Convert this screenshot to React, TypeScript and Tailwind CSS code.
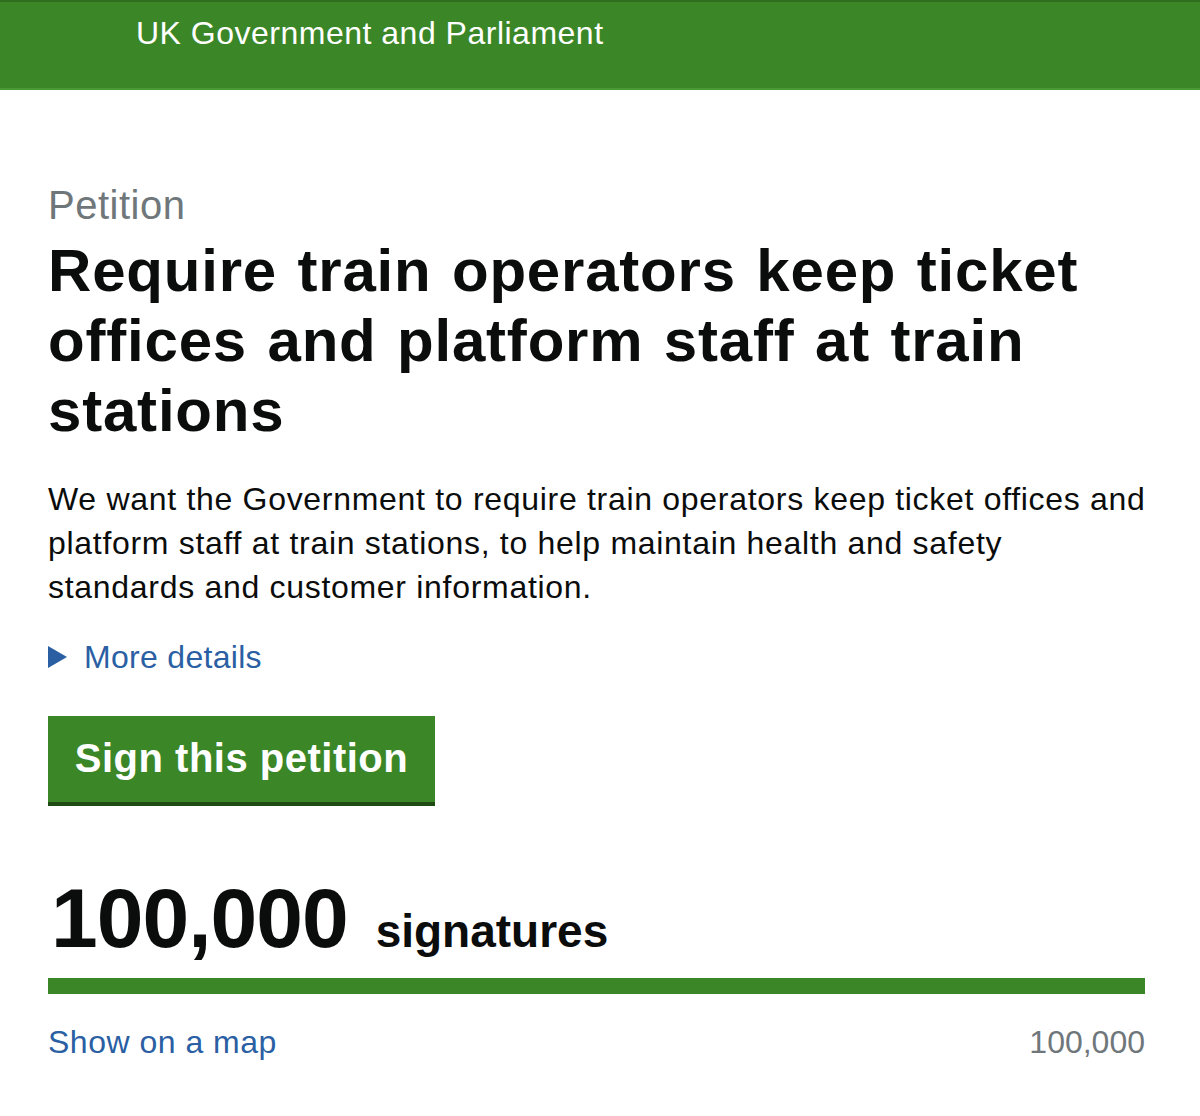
export default function App() {
  return (
    <div className="min-h-[1116px] w-[1200px] bg-white font-['Liberation_Sans',Arial,sans-serif] text-[#0b0c0c]">
      <header className="h-[90px] border-t-2 border-t-[#2f6e1f] border-b-2 border-b-[#4a9a33] bg-[#3b8727]">
        <div className="pl-[136px] pt-[13px] text-[32px] leading-[36px] tracking-[0.5px] text-white">
          UK Government and Parliament
        </div>
      </header>

      <main className="px-[48px] pt-[93px]">
        <div className="text-[40px] leading-[44px] tracking-[0.5px] text-[#6f777b]">Petition</div>
        <h1 className="mt-[9px] text-[60px] font-bold leading-[70px] tracking-[0.8px] [word-spacing:3px]">
          Require train operators keep ticket offices and platform staff at train stations
        </h1>

        <p className="mt-[31px] text-[32px] leading-[44px] tracking-[0.7px]">
          We want the Government to require train operators keep ticket offices and platform
          staff at train stations, to help maintain health and safety standards and customer
          information.
        </p>

        <div className="mt-[26px] flex items-center gap-[17px] text-[32px] leading-[44px] tracking-[0.3px] text-[#2b5fa3]">
          <svg width="19" height="22" viewBox="0 0 19 22" className="fill-[#2b5fa3]">
            <path d="M0 0 L19 11 L0 22 Z" />
          </svg>
          <span>More details</span>
        </div>

        <button className="mt-[37px] h-[86px] w-[387px] bg-[#3b8727] pb-[2px] text-[40px] font-bold tracking-[0.5px] text-white shadow-[0_4px_0_#1f4a14]">
          Sign this petition
        </button>

        <div className="mt-[76px] flex items-baseline gap-[28px] pl-[3px]">
          <span className="text-[84px] font-bold leading-[80px] tracking-[-1px]">100,000</span>
          <span className="text-[46px] font-bold leading-[46px]">signatures</span>
        </div>

        <div className="mt-[20px] h-[16px] w-[1097px] bg-[#3b8727]" />

        <div className="mt-[28px] flex w-[1097px] justify-between text-[32px] leading-[40px]">
          <span className="tracking-[0.5px] text-[#2b5fa3]">Show on a map</span>
          <span className="text-[#6f777b]">100,000</span>
        </div>
      </main>
    </div>
  );
}
